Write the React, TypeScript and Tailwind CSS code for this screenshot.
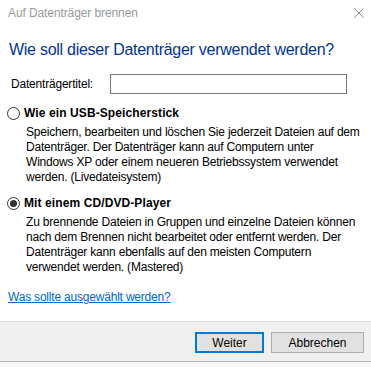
import React from "react";

const FONT = { fontFamily: '"Segoe UI", "Liberation Sans", Arial, sans-serif' };

function Radio({ checked }: { checked?: boolean }) {
  return (
    <span className="flex h-[13px] w-[13px] shrink-0 items-center justify-center rounded-full border border-[#333333] bg-white">
      {checked && <span className="h-[7px] w-[7px] rounded-full bg-[#333333]" />}
    </span>
  );
}

function Option({
  checked,
  label,
  lines,
}: {
  checked?: boolean;
  label: string;
  lines: string[];
}) {
  return (
    <div className="flex flex-col">
      <div className="flex h-[16px] items-center gap-[4px] pl-[7px]">
        <Radio checked={checked} />
        <span className="text-[12px] font-bold tracking-[0.1px] text-black">{label}</span>
      </div>
      <div className="pl-[26px] pt-[4px] text-[12px] leading-[15px] tracking-[-0.2px] text-black">
        {lines.map((l) => (
          <div key={l} className="whitespace-nowrap">
            {l}
          </div>
        ))}
      </div>
    </div>
  );
}

export default function App() {
  return (
    <div style={FONT} className="flex h-[367px] w-[371px] flex-col overflow-hidden bg-white">
      {/* Title bar */}
      <div className="flex h-[26px] shrink-0 items-center justify-between pl-[8px] pr-[7px]">
        <span className="text-[12px] tracking-[-0.1px] text-[#999999]">Auf Datenträger brennen</span>
        <svg width="10" height="10" viewBox="0 0 10 10">
          <path d="M0.5 0.5 L9.5 9.5 M9.5 0.5 L0.5 9.5" stroke="#8a8a8a" strokeWidth="1" />
        </svg>
      </div>

      {/* Body */}
      <div className="flex flex-1 flex-col">
        <div className="pl-[9px] pt-[13px] text-[16px] leading-[21px] tracking-[-0.27px] text-[#003399]">
          Wie soll dieser Datenträger verwendet werden?
        </div>

        <div className="mt-[14px] flex items-center">
          <span className="w-[110px] pl-[11px] text-[12px] tracking-[-0.2px] text-black">Datenträgertitel:</span>
          <div className="h-[20px] w-[237px] border border-[#7a7a7a] bg-white" />
        </div>

        <div className="mt-[11px]">
          <Option
            label="Wie ein USB-Speicherstick"
            lines={[
              "Speichern, bearbeiten und löschen Sie jederzeit Dateien auf dem",
              "Datenträger. Der Datenträger kann auf Computern unter",
              "Windows XP oder einem neueren Betriebssystem verwendet",
              "werden. (Livedateisystem)",
            ]}
          />
        </div>

        <div className="mt-[10px]">
          <Option
            checked
            label="Mit einem CD/DVD-Player"
            lines={[
              "Zu brennende Dateien in Gruppen und einzelne Dateien können",
              "nach dem Brennen nicht bearbeitet oder entfernt werden. Der",
              "Datenträger kann ebenfalls auf den meisten Computern",
              "verwendet werden. (Mastered)",
            ]}
          />
        </div>

        <a className="ml-[8px] mt-[14px] self-start text-[12px] leading-[16px] tracking-[-0.2px] text-[#0066cc] underline">
          Was sollte ausgewählt werden?
        </a>
      </div>

      {/* Footer */}
      <div className="flex h-[40px] shrink-0 items-start justify-end gap-[7px] border-t border-[#dfdfdf] bg-[#f0f0f0] pr-[7px] pt-[10px]">
        <button className="h-[21px] w-[69px] border-2 border-[#0078d7] bg-[#e1e1e1] text-[12px] text-black">
          Weiter
        </button>
        <button className="h-[21px] w-[93px] border border-[#adadad] bg-[#e1e1e1] text-[12px] text-black">
          Abbrechen
        </button>
      </div>
      <div className="h-[1px] shrink-0 bg-[#b4b4b4]" />
      <div className="h-[5px] shrink-0 bg-[#f7f7f7]" />
    </div>
  );
}
